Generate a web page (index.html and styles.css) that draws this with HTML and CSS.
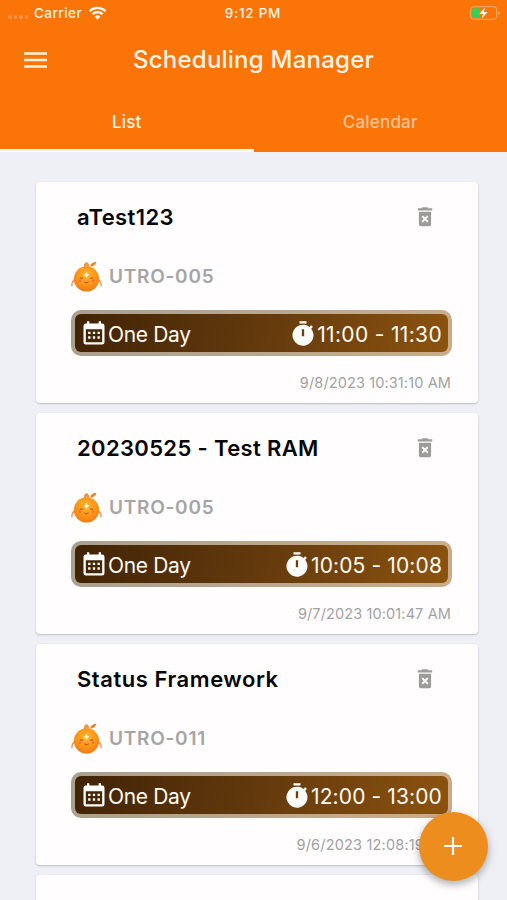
FILE: index.html
```html
<!DOCTYPE html>
<html lang="en">
<head>
<meta charset="utf-8">
<title>Scheduling Manager</title>
<link rel="stylesheet" href="styles.css">
</head>
<body>
<svg class="defs" aria-hidden="true">
  <defs>
    <radialGradient id="peel" cx=".5" cy=".35" r=".65"><stop offset="0" stop-color="#ffb52f"/><stop offset=".55" stop-color="#fb9817"/><stop offset="1" stop-color="#f07c17"/></radialGradient>
    <symbol id="trash" viewBox="0 0 16 20">
      <path fill-rule="evenodd" d="M.8 1.3H4.6L5.5.3h5l.9 1h3.8v2.3H.8zM1.9 4.8h12.2v12.4q0 2-2 2H3.9q-2 0-2-2zM4.6 9.8l2.1 2.1-2.1 2.1 1.3 1.4L8 13.3l2.1 2.1 1.3-1.4-2.1-2.1 2.1-2.1-1.3-1.4L8 10.5 5.9 8.4z"/>
    </symbol>
    <symbol id="calendar" viewBox="0 0 24 24">
      <path d="M9 10v2H7v-2zm4 0v2h-2v-2zm4 0v2h-2v-2zm2-7a2 2 0 0 1 2 2v14a2 2 0 0 1-2 2H5a2 2 0 0 1-2-2V5a2 2 0 0 1 2-2h1V1h2v2h8V1h2v2zm0 16V8H5v11zM9 14v2H7v-2zm4 0v2h-2v-2zm4 0v2h-2v-2z"/>
    </symbol>
    <symbol id="timer" viewBox="0 0 24 24">
      <path fill-rule="evenodd" d="M9 1h6v2H9zM19 7.400 20.500 6 19 4.500 17.600 6A9 9 0 1 0 19 7.400M13 14h-2V8h2z"/>
    </symbol>
    <symbol id="orange" viewBox="0 0 30 30">
      <path d="M3.500 18Q.8 20 .9 24M26.500 18q2.700 2 2.600 6" fill="none" stroke="#ed9152" stroke-width="1.300" stroke-linecap="round"/>
      <circle cx="15" cy="17.400" r="12.200" fill="url(#peel)"/>
      <path d="M13.500 6.500V3M16.500 6.500V3" stroke="#e88639" stroke-width="1.500"/>
      <circle cx="15" cy="3" r="1.900" fill="#ef9440"/>
      <path d="M18.500 5.500Q18.700 1.500 24.500.7 23.800 5 18.500 5.500" fill="#e98228"/>
      <path d="M15 10.200l1 2.300 2.200.9-2.200 1-1 2.200-1-2.200-2.200-1 2.200-.9z" fill="#fff2cc"/>
      <path d="M8.500 17q1.500-1.200 3 0M18.500 17q1.500-1.200 3 0M13 20q2 2.200 4 0" fill="none" stroke="#bd6422" stroke-width="1.200"/>
      <circle cx="8.700" cy="19.200" r="1.200" fill="#f46c3d"/><circle cx="21.300" cy="19.200" r="1.200" fill="#f46c3d"/>
    </symbol>
  </defs>
</svg>
<header class="header">
  <div class="status">
    <div class="carrier">
      <span class="dots"><i></i><i></i><i></i><i></i></span>
      <span class="carrier-name">Carrier</span>
      <svg class="wifi" viewBox="0 0 18 14"><path d="M1 5.200a11.500 11.500 0 0 1 16 0M3.900 8.200a7.300 7.300 0 0 1 10.200 0" fill="none" stroke="#fff" stroke-width="2.300"/><path d="M6.200 10.700a4 4 0 0 1 5.600 0L9 13.700z" fill="#fff"/></svg>
    </div>
    <span class="clock">9:12 PM</span>
    <svg class="battery" viewBox="0 0 30 14"><rect x=".7" y=".7" width="26" height="12.600" rx="3" fill="none" stroke="#fff" stroke-opacity=".42"/><path d="M28.300 5v4q1.300-.5 1.300-2t-1.300-2" fill="#fff" fill-opacity=".42"/><rect x="2.100" y="2.200" width="8" height="9.600" rx="1.500" fill="#35d057"/><path d="M14.900 1.500 9.500 7.800h3.600l-1.200 4.700L17.500 6h-3.700z" fill="#fff"/></svg>
  </div>
  <div class="bar">
    <svg class="menu" viewBox="0 0 23 16"><path d="M0 1.500h23M0 8h23M0 14.500h23" stroke="#fff3df" stroke-width="2.500"/></svg>
    <h1 class="title">Scheduling Manager</h1>
    <span></span>
  </div>
  <nav class="tabs"><span class="tab active">List</span><span class="tab">Calendar</span></nav>
</header>
<main class="list">
  <article class="card">
    <div class="head"><h2 class="name n1">aTest123</h2><svg class="trash"><use href="#trash"/></svg></div>
    <div class="device"><svg class="orange"><use href="#orange"/></svg><span>UTRO-005</span></div>
    <div class="slot"><svg class="icon"><use href="#calendar"/></svg><span class="day">One Day</span><svg class="icon"><use href="#timer"/></svg><span class="time t1">11:00 - 11:30</span></div>
    <time class="stamp s1">9/8/2023 10:31:10 AM</time>
  </article>
  <article class="card">
    <div class="head"><h2 class="name n2">20230525 - Test RAM</h2><svg class="trash"><use href="#trash"/></svg></div>
    <div class="device"><svg class="orange"><use href="#orange"/></svg><span>UTRO-005</span></div>
    <div class="slot"><svg class="icon"><use href="#calendar"/></svg><span class="day">One Day</span><svg class="icon"><use href="#timer"/></svg><span class="time t2">10:05 - 10:08</span></div>
    <time class="stamp">9/7/2023 10:01:47 AM</time>
  </article>
  <article class="card">
    <div class="head"><h2 class="name n3">Status Framework</h2><svg class="trash"><use href="#trash"/></svg></div>
    <div class="device"><svg class="orange"><use href="#orange"/></svg><span>UTRO-011</span></div>
    <div class="slot"><svg class="icon"><use href="#calendar"/></svg><span class="day">One Day</span><svg class="icon"><use href="#timer"/></svg><span class="time t2">12:00 - 13:00</span></div>
    <time class="stamp s3">9/6/2023 12:08:19 PM</time>
  </article>
  <article class="card"></article>
</main>
<button class="fab" aria-label="Add"><svg viewBox="0 0 18 18"><path d="M9 0v18M0 9h18" stroke="#fff" stroke-width="2.200"/></svg></button>
</body>
</html>
```
FILE: styles.css
```css
* { box-sizing: border-box; }
body { margin: 0; height: 900px; overflow: hidden; background: #eff0f6; font-family: Inter, "Liberation Sans", sans-serif; display: flex; flex-direction: column; }
svg { display: block; flex: none; }
.defs { width: 0; height: 0; position: absolute; }
h1, h2 { margin: 0; }
.header { flex: none; height: 152px; background: #fa7408; color: #fff5e6; display: flex; flex-direction: column; }
.status { height: 26px; display: grid; grid-template-columns: 1fr auto 1fr; align-items: center; padding: 0 7px 0 8px; font-size: 13.5px; font-weight: 500; }
.carrier { display: flex; align-items: center; }
.dots { display: flex; gap: 2px; width: 26px; padding-top: 8px; }
.dots i { width: 3.5px; height: 3.5px; border-radius: 50%; background: #fc9148; }
.carrier-name { width: 54px; letter-spacing: .45px; }
.clock { letter-spacing: .75px; margin-right: 2px; }
.wifi { width: 19px; height: 14px; }
.battery { width: 30px; height: 14px; justify-self: end; }
.bar { height: 66px; display: grid; grid-template-columns: 1fr auto 1fr; align-items: center; padding: 2px 24px 0; }
.menu { width: 23px; height: 16px; }
.title { font-size: 24px; font-weight: 500; letter-spacing: .23px; line-height: 30px; }
.tabs { flex: 1; display: flex; font-size: 17px; font-weight: 500; letter-spacing: .2px; }
.tab { flex: 1; display: flex; align-items: center; justify-content: center; padding-top: 3px; color: #fdc391; border-bottom: 3px solid transparent; }
.active { color: #fff5e6; border-color: #fffaf2; }
.list { flex: 1; min-height: 0; overflow: hidden; padding: 30px 29px 0 36px; display: flex; flex-direction: column; gap: 10px; }
.card { flex: none; height: 221px; padding: 20px 26px 0 35px; background: #fffdfe; border-radius: 4px; box-shadow: 0 1px 2px rgba(60, 60, 70, .28); }
.head { display: flex; justify-content: space-between; align-items: center; height: 30px; padding: 0 19px 0 6px; }
.name { font-size: 22px; font-weight: 600; color: #060606; line-height: 30px; white-space: nowrap; }
.n1 { letter-spacing: .4px; }
.n2 { letter-spacing: .35px; }
.n3 { letter-spacing: .55px; }
.trash { width: 16px; height: 20px; fill: #9e9b9b; }
.device { display: flex; align-items: center; height: 30px; margin-top: 29px; gap: 7px; font-size: 19px; font-weight: 600; letter-spacing: .75px; color: #a5a5a5; }
.orange { width: 31px; height: 31px; }
.slot { display: flex; align-items: center; height: 46px; margin-top: 19px; padding: 1px 6px 0 5px; border: 4px solid transparent; border-radius: 10px; background: linear-gradient(105deg, #402305, #643a0d 50%, #8c530f) padding-box, linear-gradient(90deg, #aaa08e, #c9ad8b) border-box; color: #fffaf3; font-size: 21px; }
.icon { width: 28px; height: 28px; fill: #fff; }
.day { flex: 1; letter-spacing: -.35px; padding-top: 2px; }
.time { white-space: nowrap; padding-top: 2px; }
.t1 { letter-spacing: .33px; }
.t2 { letter-spacing: .12px; }
.stamp { display: block; margin-top: 17px; padding-right: 1px; text-align: right; font-size: 14.5px; line-height: 20px; letter-spacing: .12px; color: #a2a2a2; }
.s3 { letter-spacing: .18px; }
.fab { position: absolute; left: 419px; top: 812px; width: 69px; height: 69px; border: 0; border-radius: 50%; background: #ec8d1e; display: grid; place-items: center; padding: 0 1px 1px 0; box-shadow: 0 4px 7px rgba(0, 0, 0, .22), 0 2px 12px rgba(0, 0, 0, .12); }
.fab svg { width: 18px; height: 18px; }
```
